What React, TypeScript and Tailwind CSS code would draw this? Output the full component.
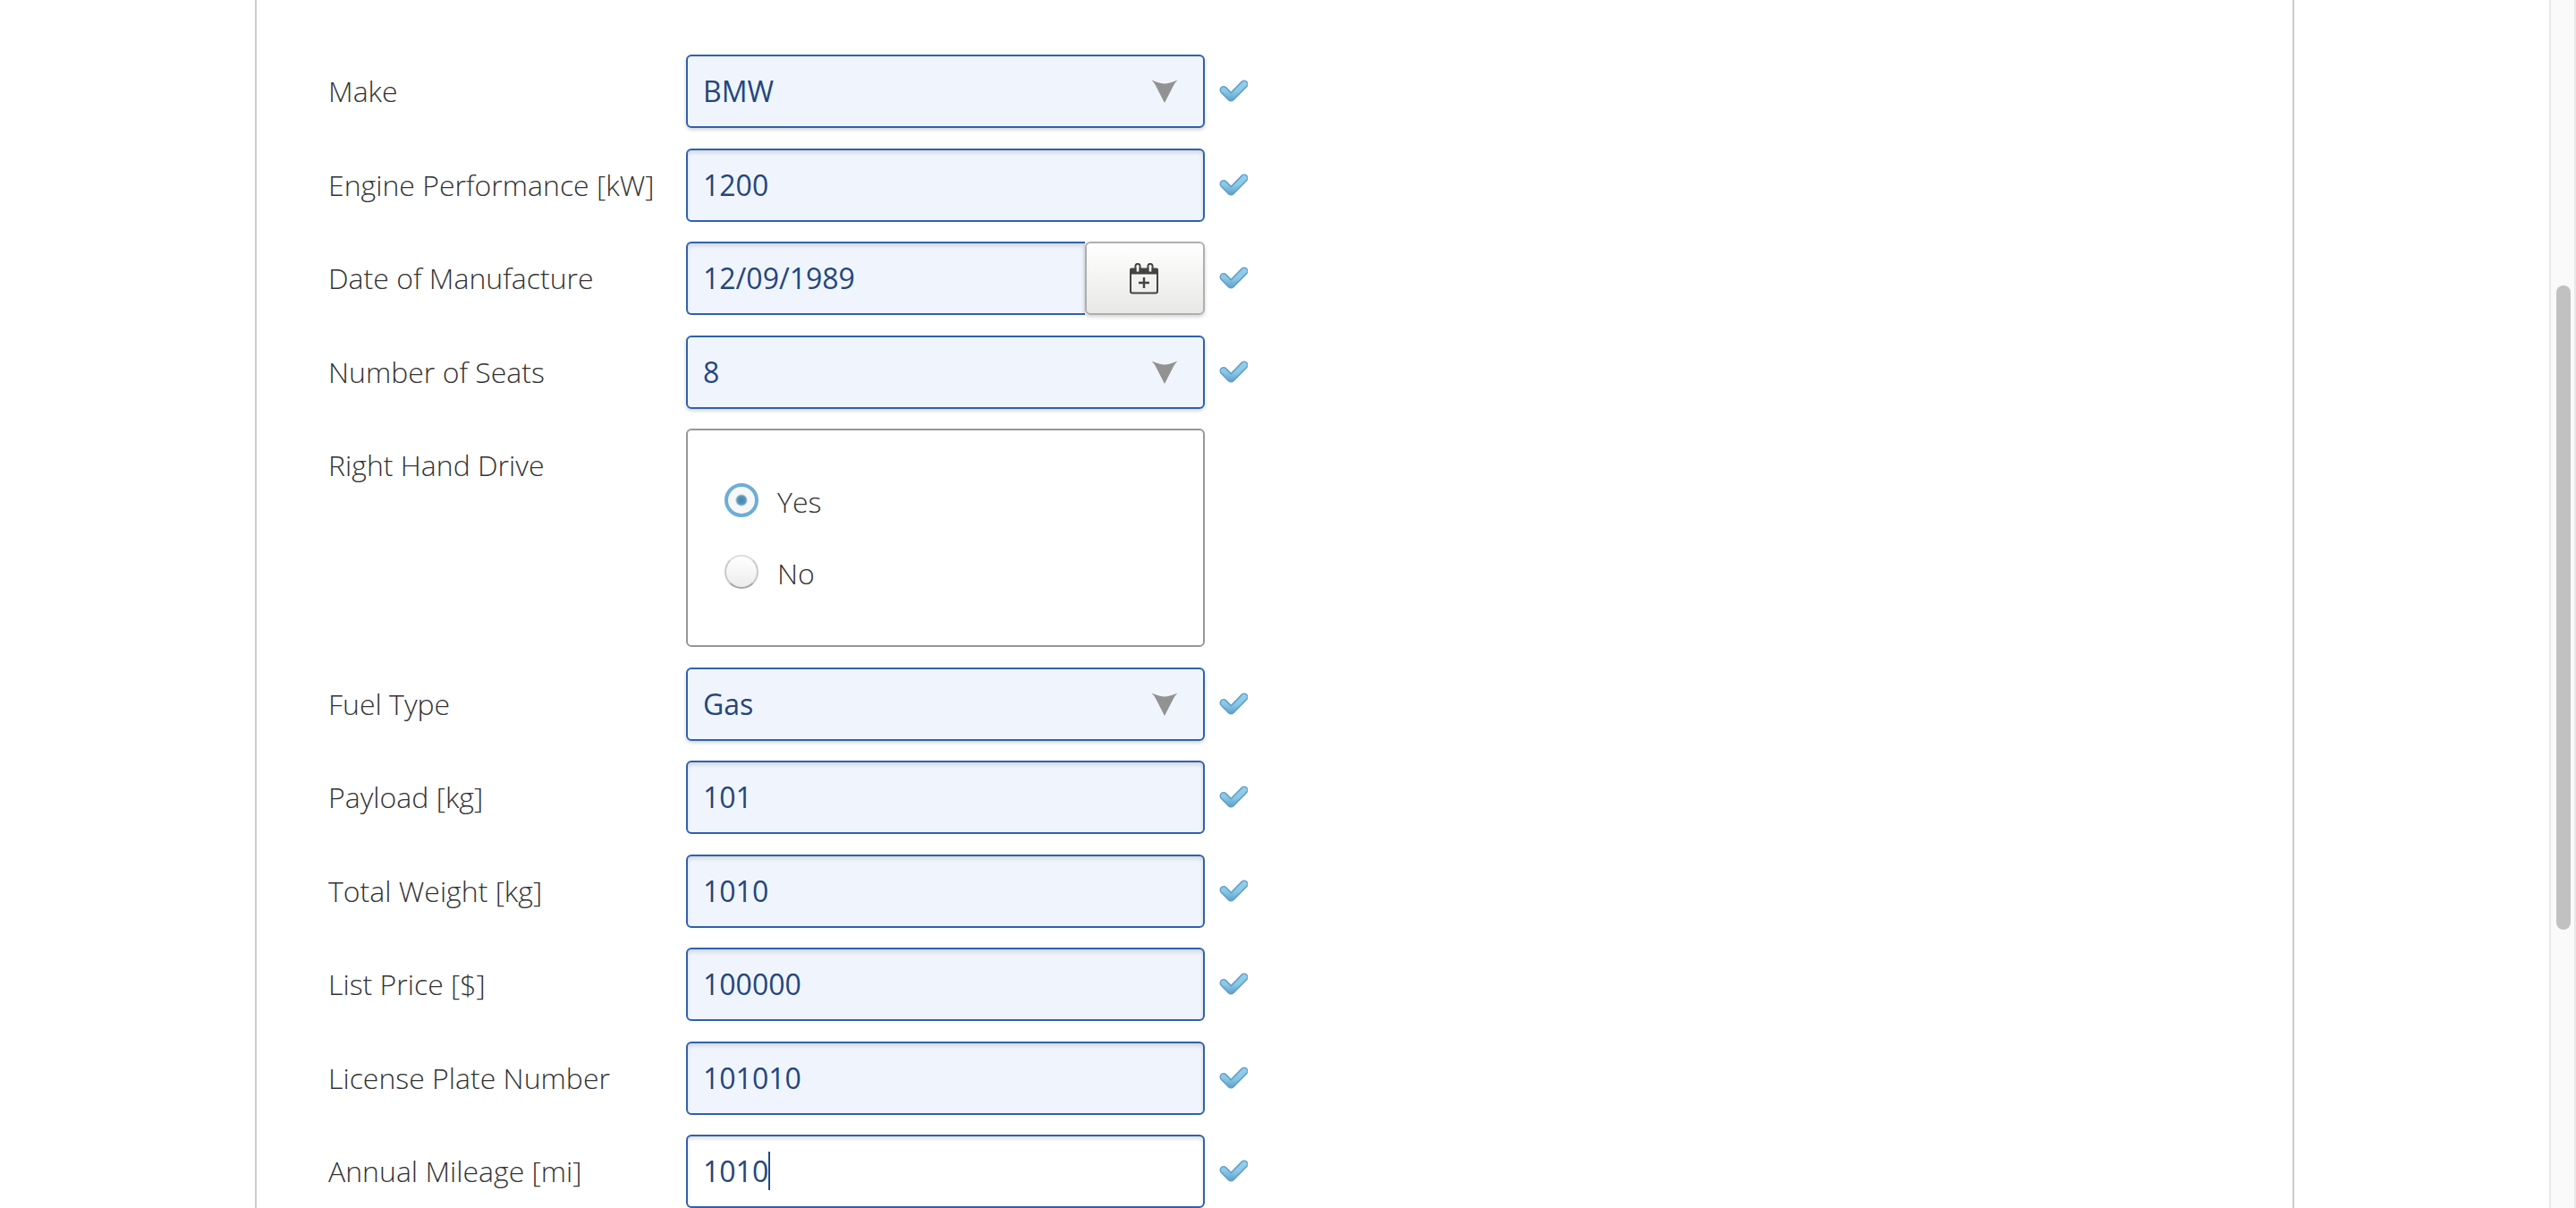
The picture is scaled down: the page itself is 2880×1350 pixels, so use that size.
import { useEffect, useRef, type ReactNode } from "react";
import clsx from "clsx";

const fieldBase =
  "block h-[82px] w-full appearance-none rounded-md border-2 border-[#2f62ac] px-[17px] text-[32px] font-normal text-[#24467e] outline-none";
const innerShadow = "pb-[2px] shadow-[inset_0_3px_4px_rgba(0,0,0,0.12)]";

function Check() {
  return (
    <svg className="h-[26px] w-8 shrink-0" viewBox="0 0 32 26" fill="none" aria-label="Valid" role="img">
      <defs>
        <linearGradient id="tick" x1="0" y1="2" x2="0" y2="24" gradientUnits="userSpaceOnUse">
          <stop offset="0" stopColor="#93cfed" />
          <stop offset="0.5" stopColor="#8ac8e8" />
          <stop offset="1" stopColor="#5a9fca" />
        </linearGradient>
      </defs>
      <path d="M5 11.5 L13.3 20 L28 5" stroke="#659fc4" strokeWidth="9" strokeLinecap="round" strokeLinejoin="round" />
      <path d="M5 11.5 L13.3 20 L28 5" stroke="url(#tick)" strokeWidth="6" strokeLinecap="round" strokeLinejoin="round" />
    </svg>
  );
}

function Row({ label, htmlFor, valid = true, children }: { label: string; htmlFor: string; valid?: boolean; children: ReactNode }) {
  return (
    <div className="flex items-start odd:pb-px">
      <label htmlFor={htmlFor} id={htmlFor + "-label"} className="flex h-[82px] w-[400px] shrink-0 items-center whitespace-nowrap">
        {label}
      </label>
      <div className="w-[580px]">{children}</div>
      {valid && (
        <div className="flex h-[82px] items-center pl-4">
          <Check />
        </div>
      )}
    </div>
  );
}

function TextRow({ id, label, value, focused = false }: { id: string; label: string; value: string; focused?: boolean }) {
  const ref = useRef<HTMLInputElement>(null);
  useEffect(() => {
    if (focused && ref.current) {
      ref.current.focus({ preventScroll: true });
      ref.current.setSelectionRange(value.length, value.length);
    }
  }, [focused, value]);
  return (
    <Row label={label} htmlFor={id}>
      <div className="relative">
        <input
          ref={ref}
          id={id}
          type="text"
          defaultValue={value}
          className={clsx(fieldBase, innerShadow, focused ? "bg-white caret-transparent" : "bg-[#f0f5fd]")}
        />
        {focused && <span className="pointer-events-none absolute top-[19px] left-[92px] h-[43px] w-0.5 bg-[#24467e]" aria-hidden="true" />}
      </div>
    </Row>
  );
}

function SelectRow({ id, label, value, options }: { id: string; label: string; value: string; options: string[] }) {
  return (
    <Row label={label} htmlFor={id}>
      <div className="relative">
        <select id={id} defaultValue={value} className={clsx(fieldBase, "bg-[#f0f5fd] shadow-[0_2px_4px_rgba(0,0,0,0.18)]")}>
          {options.map((o) => (
            <option key={o}>{o}</option>
          ))}
        </select>
        <svg className="pointer-events-none absolute top-7 right-[30px] h-[26px] w-[30px]" viewBox="0 0 30 26" aria-hidden="true">
          <path d="M0.5 0.5 Q10 4.5 15 4.5 Q20 4.5 29.5 0.5 Q26 4 24.5 7.5 L15 26 L5.5 7.5 Q4 4 0.5 0.5 Z" fill="#929292" />
        </svg>
      </div>
    </Row>
  );
}

function RadioOption({ label, checked = false }: { label: string; checked?: boolean }) {
  return (
    <label className="flex h-20 items-center gap-[21px]">
      <input
        type="radio"
        name="rightHandDrive"
        defaultChecked={checked}
        className="mb-1 h-[38px] w-[38px] appearance-none rounded-full border-2 border-[#c9c9c9] border-t-[#dddddd] border-b-[#a6a6a6] bg-linear-to-b from-white to-[#ececec] checked:border-4 checked:border-[#6dadd6] checked:bg-[radial-gradient(circle,#457fa6_0,#5c9bc2_5px,#f7f7f7_7px)]"
      />
      <span>{label}</span>
    </label>
  );
}

function CalendarIcon() {
  return (
    <svg className="h-[35px] w-8" viewBox="0 0 32 35" fill="none" aria-hidden="true">
      <rect x="1" y="7" width="30" height="26.5" rx="2" stroke="#444" strokeWidth="2" />
      <path d="M0 12.5 V7.5 Q0 5.5 2 5.5 H30 Q32 5.5 32 7.5 V12.5 Z" fill="#444" />
      <path d="M6.5 10 V4 Q6.5 1 9 1 Q11.5 1 11.5 4 V10 M20.5 10 V4 Q20.5 1 23 1 Q25.5 1 25.5 4 V10" stroke="#444" strokeWidth="2.2" />
      <path d="M9 2.5 V9.5 M23 2.5 V9.5" stroke="#fff" strokeWidth="2.6" />
      <path d="M16 16 V28 M10 22 H22" stroke="#444" strokeWidth="2.4" />
    </svg>
  );
}

export default function App() {
  return (
    <div className="flex h-screen overflow-hidden bg-white font-['Open_Sans','Noto_Sans',sans-serif] text-[32px] font-light text-[#333]">
      <main className="flex-1">
        <form className="mx-auto flex min-h-full w-4/5 flex-col gap-[22px] border-x-2 border-[#ccc] px-20 pt-[61px]">
          <SelectRow id="make" label="Make" value="BMW" options={["Audi", "BMW", "Ford"]} />
          <TextRow id="power" label="Engine Performance [kW]" value="1200" />
          <Row label="Date of Manufacture" htmlFor="date">
            <div className="flex">
              <input id="date" type="text" defaultValue="12/09/1989" className={clsx(fieldBase, innerShadow, "min-w-0 flex-1 rounded-r-none border-r-0 bg-[#f0f5fd]")} />
              <button
                type="button"
                aria-label="Open calendar"
                className="flex w-[134px] items-center justify-center rounded-md border-2 border-[#afafaf] bg-linear-to-b from-white to-[#e8e8e5] pr-0.5 shadow-[0_2px_4px_rgba(0,0,0,0.18)]"
              >
                <CalendarIcon />
              </button>
            </div>
          </Row>
          <SelectRow id="seats" label="Number of Seats" value="8" options={["1", "2", "4", "8"]} />
          <Row label="Right Hand Drive" htmlFor="drive" valid={false}>
            <div id="drive" role="radiogroup" aria-labelledby="drive-label" className="flex h-[244px] flex-col justify-center rounded-md border-2 border-[#979797] px-[41px]">
              <RadioOption label="Yes" checked />
              <RadioOption label="No" />
            </div>
          </Row>
          <SelectRow id="fuel" label="Fuel Type" value="Gas" options={["Petrol", "Diesel", "Gas"]} />
          <TextRow id="payload" label="Payload [kg]" value="101" />
          <TextRow id="weight" label="Total Weight [kg]" value="1010" />
          <TextRow id="price" label="List Price [$]" value="100000" />
          <TextRow id="plate" label="License Plate Number" value="101010" />
          <TextRow id="mileage" label="Annual Mileage [mi]" value="1010" focused />
        </form>
      </main>
      <div className="w-[30px] border-x-2 border-[#e8e8e8] bg-[#fafafa] px-1.5 pt-[319px]" aria-hidden="true">
        <div className="h-[720px] w-4 rounded-full bg-[#c1c1c1]" />
      </div>
    </div>
  );
}
